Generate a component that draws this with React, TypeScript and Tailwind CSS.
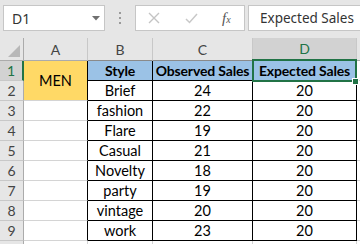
import React from "react";

const rows: [string, string, string][] = [
  ["Brief", "24", "20"],
  ["fashion", "22", "20"],
  ["Flare", "19", "20"],
  ["Casual", "21", "20"],
  ["Novelty", "18", "20"],
  ["party", "19", "20"],
  ["vintage", "20", "20"],
  ["work", "23", "20"],
];

const cellFont = "font-['Lato','Liberation_Sans',sans-serif] text-[14.5px] text-black";
const boldFont = "font-['Lato','Liberation_Sans',sans-serif] text-[14px] tracking-[-0.15px] font-bold text-black";
const hdrFont = "font-['Lato','Liberation_Sans',sans-serif] text-[14px]";

function RowHead({ n, sel }: { n?: number; sel?: boolean }) {
  return (
    <div
      className={
        "flex items-center justify-center border-b border-b-[#c8c8c8] " +
        hdrFont +
        (sel
          ? " bg-[#d2d2d2] text-[#217346] border-r-2 border-r-[#217346]"
          : " bg-[#e6e6e6] text-[#444] border-r border-r-[#ababab]")
      }
    >
      {n}
    </div>
  );
}

export default function App() {
  return (
    <div className="w-[360px] h-[244px] overflow-hidden bg-white relative select-none">
      {/* Formula bar */}
      <div className="h-[38px] bg-[#e6e6e6] flex items-start pt-[5px]">
        <div className="ml-[3px] w-[102px] h-[26px] bg-white border border-[#c6c6c6] flex items-center relative">
          <span className="ml-[8px] font-['Noto_Sans','Open_Sans',sans-serif] text-[14px] text-[#333]">D1</span>
          <svg className="absolute left-[88px] top-[10px]" width="8" height="5" viewBox="0 0 8 5">
            <polygon points="0,0 8,0 4,4.5" fill="#707070" />
          </svg>
        </div>
        <div className="w-[30px] h-[26px] flex flex-col items-center justify-center gap-[3px]">
          <div className="w-[2px] h-[2px] bg-[#9a9a9a]" />
          <div className="w-[2px] h-[2px] bg-[#9a9a9a]" />
          <div className="w-[2px] h-[2px] bg-[#9a9a9a]" />
        </div>
        <div className="w-[110px] h-[26px] bg-white border border-[#c6c6c6] flex items-center">
          <svg className="ml-[12px]" width="12" height="12" viewBox="0 0 12 12">
            <path d="M1 1 L11 11 M11 1 L1 11" stroke="#c4c4c4" strokeWidth="1.4" />
          </svg>
          <svg className="ml-[25px]" width="13" height="11" viewBox="0 0 13 11">
            <path d="M1 6 L4.5 9.5 L12 1" stroke="#c8c8c8" strokeWidth="1.5" fill="none" />
          </svg>
          <span className="ml-[24px] font-['Liberation_Serif',serif] italic text-[15px] text-[#555] leading-none">
            f<span className="text-[10px]">x</span>
          </span>
        </div>
        <div className="ml-[3px] flex-1 -mr-[4px] h-[26px] bg-white border border-[#c6c6c6] flex items-center">
          <span className="ml-[11px] font-['Noto_Sans','Open_Sans',sans-serif] text-[13.5px] text-[#333]">Expected Sales</span>
        </div>
      </div>

      {/* Grid */}
      <div className="grid grid-cols-[24px_64px_65px_100px_104px_1fr] grid-rows-[23px_repeat(10,20px)]">
        {/* header row */}
        <div className="bg-[#e6e6e6] border-r border-r-[#ababab] border-b border-b-[#ababab] relative">
          <svg className="absolute left-[8px] top-[7px]" width="12" height="12" viewBox="0 0 12 12">
            <polygon points="12,0 12,12 0,12" fill="#b8b8b8" />
          </svg>
        </div>
        <div className={"bg-[#e6e6e6] border-r border-r-[#c8c8c8] border-b border-b-[#ababab] flex items-center justify-center text-[#444] " + hdrFont}>A</div>
        <div className={"bg-[#e6e6e6] border-r border-r-[#c8c8c8] border-b border-b-[#8a8a8a] flex items-center justify-center text-[#444] " + hdrFont}>B</div>
        <div className={"bg-[#e6e6e6] border-r border-r-[#c8c8c8] border-b border-b-[#8a8a8a] flex items-center justify-center text-[#444] " + hdrFont}>C</div>
        <div className={"bg-[#d2d2d2] border-r border-r-[#c8c8c8] border-b-2 border-b-[#217346] flex items-center justify-center text-[#217346] " + hdrFont}>D</div>
        <div className="bg-[#e6e6e6] border-b border-b-[#ababab]" />

        {/* row 1 */}
        <RowHead n={1} sel />
        <div className={"row-span-2 bg-[#ffd966] border-r border-r-black border-b border-b-[#d4d4d4] flex items-center justify-center " + cellFont}>
          MEN
        </div>
        <div className={"bg-[#9bc2e6] border-r border-b border-black flex items-center justify-center " + boldFont}>Style</div>
        <div className={"bg-[#9bc2e6] border-r border-b border-black flex items-center justify-center whitespace-nowrap " + boldFont}>Observed Sales</div>
        <div className={"bg-[#9bc2e6] border-r border-b border-black flex items-center justify-center whitespace-nowrap relative " + boldFont}>
          Expected Sales
          <div className="absolute left-[-1px] top-[-2px] w-[105px] h-[23px] border-2 border-[#217346]" />
          <div className="absolute left-[99px] top-[17px] w-[7px] h-[7px] bg-[#217346] border border-white" />
        </div>
        <div className="border-b border-[#d4d4d4]" />

        {rows.map((r, i) => (
          <React.Fragment key={i}>
            <RowHead n={i + 2} />
            {i > 0 && <div className="border-r border-r-black border-b border-b-[#d4d4d4]" />}
            <div className={"border-r border-b border-black flex items-center justify-center " + cellFont}>{r[0]}</div>
            <div className={"border-r border-b border-black flex items-center justify-center " + cellFont}>{r[1]}</div>
            <div className={"border-r border-b border-black flex items-center justify-center " + cellFont}>{r[2]}</div>
            <div className="border-b border-[#d4d4d4]" />
          </React.Fragment>
        ))}

        {/* row 10 partial */}
        <RowHead />
        <div className="border-r border-b border-[#d4d4d4]" />
        <div className="border-r border-b border-[#d4d4d4]" />
        <div className="border-r border-b border-[#d4d4d4]" />
        <div className="border-r border-b border-[#d4d4d4]" />
        <div className="border-b border-[#d4d4d4]" />
      </div>
    </div>
  );
}
